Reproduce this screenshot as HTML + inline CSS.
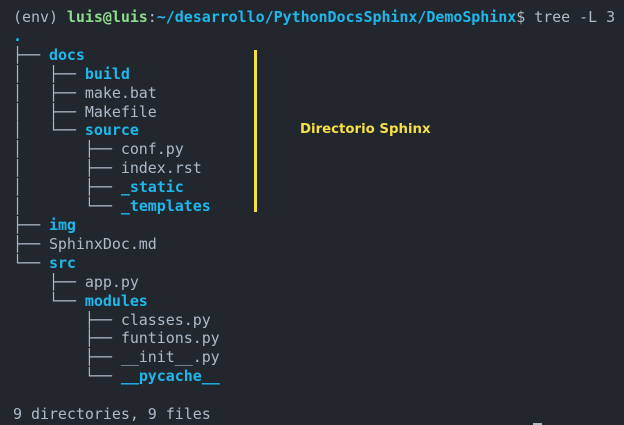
<!DOCTYPE html>
<html><head><meta charset="utf-8"><style>
html,body{margin:0;padding:0;background:#22272e;width:624px;height:425px;overflow:hidden}
pre{margin:0;position:absolute;left:13px;top:8px;font-family:"DejaVu Sans Mono","Liberation Mono",monospace;font-size:15px;letter-spacing:-0.045px;line-height:18.9px;color:#adbac7}
.b{color:#1fb8ec;font-weight:bold}
.g{color:#8ddb8c;font-weight:bold}
.vl{position:absolute;left:254px;top:50px;width:3px;height:162px;background:#f5e047}
.lab{position:absolute;left:300px;top:122px;font-family:"DejaVu Sans",sans-serif;font-weight:bold;font-size:13.3px;color:#f5e047}
.cur{position:absolute;left:533px;top:423px;width:9px;height:2px;background:#adbac7}
</style></head><body>
<pre>(env) <span class="g">luis@luis</span>:<span class="b">~/desarrollo/PythonDocsSphinx/DemoSphinx</span>$ tree -L 3
<span class="b">.</span>
├── <span class="b">docs</span>
│   ├── <span class="b">build</span>
│   ├── make.bat
│   ├── Makefile
│   └── <span class="b">source</span>
│       ├── conf.py
│       ├── index.rst
│       ├── <span class="b">_static</span>
│       └── <span class="b">_templates</span>
├── <span class="b">img</span>
├── SphinxDoc.md
└── <span class="b">src</span>
    ├── app.py
    └── <span class="b">modules</span>
        ├── classes.py
        ├── funtions.py
        ├── __init__.py
        └── <span class="b">__pycache__</span>

9 directories, 9 files</pre>
<div class="vl"></div>
<div class="lab">Directorio Sphinx</div>
<div class="cur"></div>
</body></html>
